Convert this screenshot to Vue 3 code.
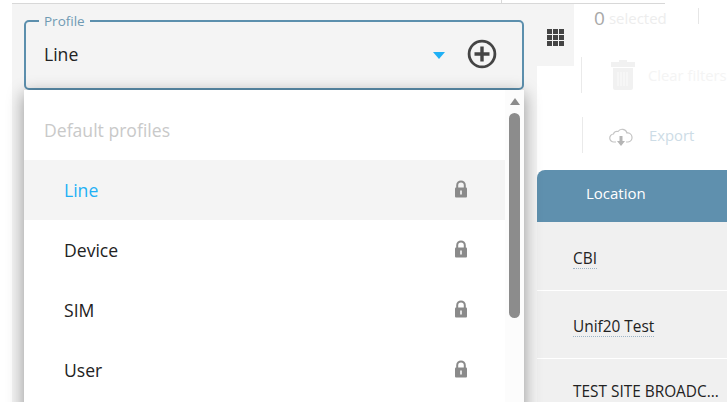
<template>
  <div class="page">
    <div class="left">
      <div class="topline"><span class="tick"></span></div>
      <fieldset class="field">
        <legend>Profile</legend>
        <span class="value">Line</span>
        <span class="caret"></span>
        <svg class="add" viewBox="0 0 30 30" width="30" height="30">
          <circle cx="15" cy="15" r="12.9" fill="none" stroke="#444" stroke-width="2.8" />
          <path d="M15 7.500v15M7.500 15h15" stroke="#444" stroke-width="3.4" fill="none" />
        </svg>
      </fieldset>
      <div class="menu">
        <div class="list">
          <div class="group">Default profiles</div>
          <div v-for="p in profiles" :key="p" class="item" :class="{ active: p === 'Line' }">
            <span>{{ p }}</span>
            <svg class="lock" viewBox="0 0 14 18" width="14" height="18">
              <path d="M3.200 8V5.200a3.800 3.800 0 0 1 7.600 0V8" fill="none" stroke="#8a8a8a" stroke-width="2" />
              <rect x="1" y="7.500" width="12" height="10" rx="1" fill="#8a8a8a" />
              <path d="M7 10.500v4" stroke="#fff" stroke-width="1.500" />
            </svg>
          </div>
        </div>
        <div class="scroll">
          <span class="up"></span>
          <span class="thumb"></span>
        </div>
      </div>
    </div>
    <div class="right">
      <div class="top">
        <div class="gridcell">
          <svg viewBox="0 0 17 17" width="17" height="17">
            <path fill="#444" d="M0 0h5v5H0zM6 0h5v5H6zM12 0h5v5h-5zM0 6h5v5H0zM6 6h5v5H6zM12 6h5v5h-5zM0 12h5v5H0zM6 12h5v5H6zM12 12h5v5h-5z" />
          </svg>
        </div>
        <div class="selected"><b>0</b> <span>selected</span><i></i></div>
      </div>
      <div class="action clear">
        <svg viewBox="0 0 24 30" width="24" height="30">
          <path fill="#f1f1f1" d="M8 0h8v2h8v5H0V2h8zM2 8h20v20a2 2 0 0 1-2 2H4a2 2 0 0 1-2-2z" />
          <path stroke="#fbfbfb" stroke-width="1" d="M7 12v14M10 12v14M13 12v14M16 12v14" />
        </svg>
        <span>Clear filters</span>
      </div>
      <div class="action export">
        <svg viewBox="0 0 24 20" width="24" height="20">
          <path fill="none" stroke="#c4c4c4" stroke-width="1.200" d="M7 15H5a4 4 0 0 1-.5-8A3.500 3.500 0 0 1 9 4.500a5 5 0 0 1 9 1.500 4.500 4.500 0 0 1 1 9h-2" />
          <path fill="#b5b5b5" d="M10.500 9h3v5H16l-4 5-4-5h2.500z" />
        </svg>
        <span>Export</span>
      </div>
      <div class="thead">Location</div>
      <div v-for="r in rows" :key="r.text" class="row" :class="r.cls">
        <span :class="{ dotted: r.dotted }">{{ r.text }}</span>
      </div>
    </div>
  </div>
</template>

<script setup>
const profiles = ['Line', 'Device', 'SIM', 'User']
const rows = [
  { text: 'CBI', dotted: true, cls: 'r1' },
  { text: 'Unif20 Test', dotted: true, cls: 'r2' },
  { text: 'TEST SITE BROADC...', dotted: false, cls: 'r3' }
]
</script>

<style>
html, body { margin: 0; background: #fff; overflow: hidden; }
</style>

<style scoped>
.page {
  width: 727px;
  height: 402px;
  overflow: hidden;
  display: flex;
  padding-left: 12px;
  box-sizing: border-box;
  background: #fff;
  font-family: "Open Sans", sans-serif;
  color: #222;
  position: relative;
}
.left {
  width: 525px;
  height: 402px;
  background: #f4f4f4;
  position: relative;
  padding: 20px 0 0 12px;
  box-sizing: border-box;
  flex: none;
}
.topline {
  position: absolute;
  left: 0;
  top: 0;
  width: 653px;
  height: 3px;
  background: #fff;
  border-bottom: 1px solid #d8d8d8;
  z-index: 3;
}
.tick {
  position: absolute;
  left: 489px;
  top: 0;
  width: 1px;
  height: 3px;
  background: #d8d8d8;
}
.field {
  margin: 0;
  padding: 0 0 0 18px;
  width: 500px;
  box-sizing: border-box;
  border: 2px solid #5c8fad;
  border-radius: 5px;
  position: relative;
  top: -8px;
  height: 78px;
  margin-bottom: -8px;
  background: transparent;
}
.field legend {
  font-size: 13.500px;
  line-height: 18px;
  color: #6f9ab3;
  padding: 0 5px;
  margin-left: -5px;
}
.value {
  display: block;
  font-size: 17.600px;
  line-height: 24px;
  color: #222;
  margin-top: 12px;
}
.caret {
  position: absolute;
  left: 407px;
  top: 22px;
  width: 0;
  height: 0;
  border-left: 6.500px solid transparent;
  border-right: 6.500px solid transparent;
  border-top: 7px solid #1fb0f5;
}
.add {
  position: absolute;
  left: 441px;
  top: 9px;
}
.menu {
  position: absolute;
  left: 12px;
  top: 90px;
  width: 500px;
  height: 330px;
  background: #fff;
  display: flex;
  box-shadow: 0 4px 16px rgba(0, 0, 0, .4);
  z-index: 2;
}
.list { width: 481px; flex: none; }
.group {
  height: 70px;
  padding: 0 20px;
  line-height: 80px;
  font-size: 17.600px;
  color: #c9c9c9;
}
.item {
  height: 60px;
  padding: 0 37px 0 40px;
  display: flex;
  align-items: center;
  justify-content: space-between;
  font-size: 17.600px;
  color: #222;
}
.item.active { background: #f4f4f4; color: #1fb0f5; }
.lock { position: relative; top: -1px; }
.scroll {
  flex: 1;
  background: #fcfcfc;
  position: relative;
}
.up {
  position: absolute;
  left: 5px;
  top: 8px;
  width: 0;
  height: 0;
  border-left: 5px solid transparent;
  border-right: 5px solid transparent;
  border-bottom: 7px solid #8c8c8c;
}
.thumb {
  position: absolute;
  left: 4px;
  top: 23px;
  width: 11px;
  height: 205px;
  background: #8c8c8c;
  border-radius: 6px;
}
.right {
  flex: 1;
  min-width: 0;
}
.top { display: flex; height: 66px; }
.gridcell {
  width: 37px;
  background: #f4f4f4;
  margin-top: 4px;
  padding: 25px 0 0 10px;
  box-sizing: border-box;
}
.selected {
  padding: 6px 0 0 20px;
  font-size: 16px;
  display: flex;
  align-items: flex-start;
  line-height: 24px;
  height: 30px;
  position: relative;
}
.selected b { font-weight: 400; color: #a8a8a8; font-size: 19px; margin-right: 4px; }
.selected span { color: #ededed; font-size: 15px; }
.selected i {
  position: absolute;
  left: 124px;
  top: 8px;
  width: 1px;
  height: 16px;
  background: #e6e6e6;
}
.action {
  margin-left: 44px;
  height: 36px;
  border-left: 1px solid #eaeaea;
  display: flex;
  align-items: center;
  font-size: 14.800px;
  position: relative;
  white-space: nowrap;
}
.action span { position: absolute; left: 67px; }
.action svg { position: absolute; }
.clear { margin-top: -9px; color: #f4f4f4; }
.clear svg { left: 29px; top: 3px; }
.clear span { top: 8px; left: 66px; }
.export { margin-top: 24px; margin-left: 45px; color: #cddce6; }
.export svg { left: 26px; top: 10px; }
.export span { left: 66px; top: 8px; }
.thead {
  margin-top: 17px;
  height: 52px;
  background: #5f90ae;
  border-top-left-radius: 8px;
  color: #fff;
  font-size: 15px;
  line-height: 47px;
  padding-left: 49px;
}
.row {
  background: #f0f0f0;
  border-bottom: 1px solid #fff;
  padding-left: 36px;
  font-size: 15.400px;
  color: #222;
  box-sizing: border-box;
  white-space: nowrap;
}
.r1 { height: 69px; padding-top: 26px; }
.r2 { height: 68px; padding-top: 25px; }
.r3 { height: 60px; padding-top: 22px; border-bottom: 0; }
.dotted { border-bottom: 1px dotted #9db4c6; display: inline-block; line-height: 18px; }
</style>
